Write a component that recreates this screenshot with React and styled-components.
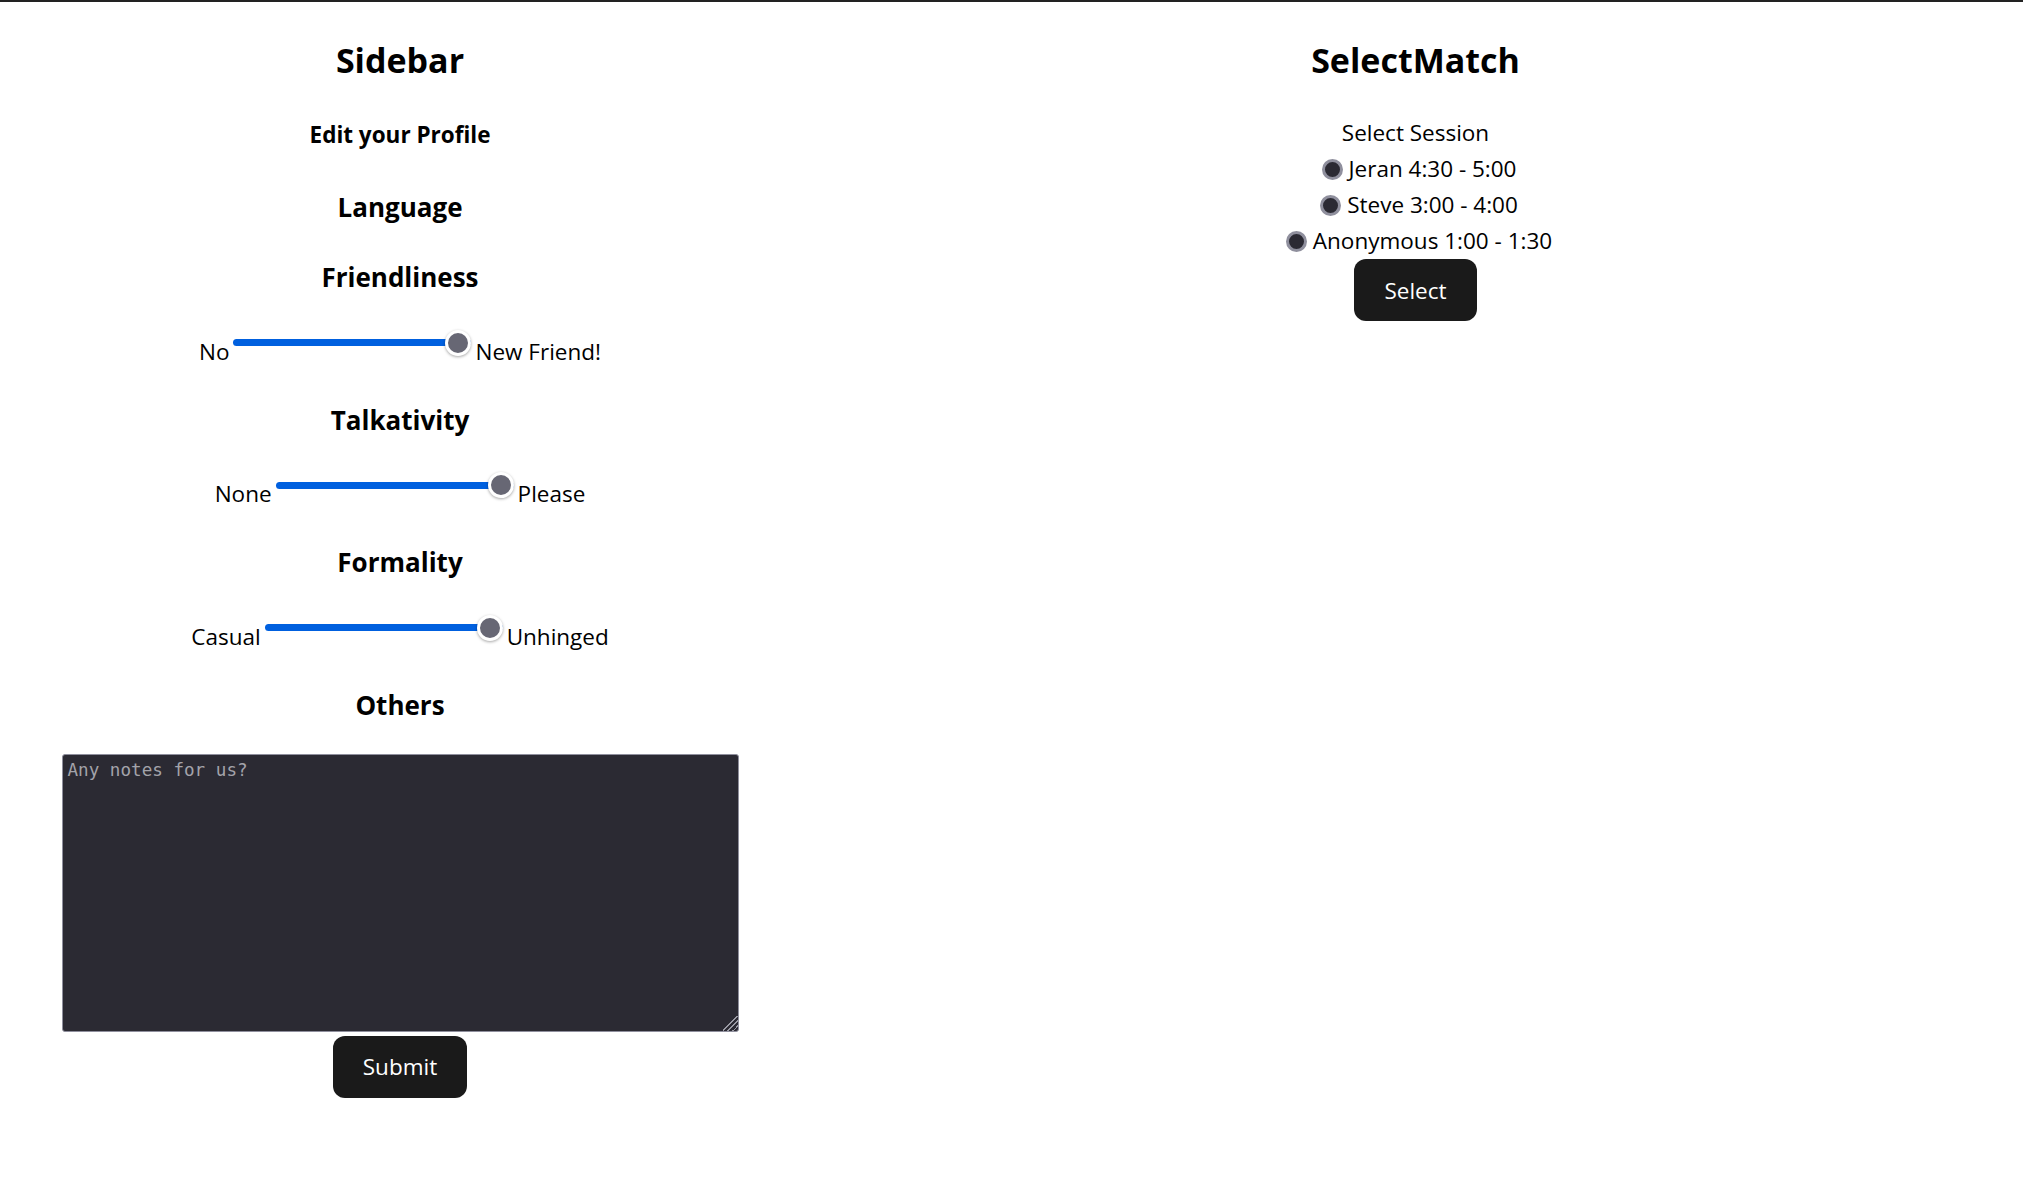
import React from "react";
import styled, { createGlobalStyle } from "styled-components";

const GlobalStyle = createGlobalStyle`
  html, body {
    margin: 0;
    padding: 0;
    background: #fff;
  }
  body {
    border-top: 2px solid #222;
    font-family: "Open Sans", "Noto Sans", sans-serif;
    font-size: 22.5px;
    color: #000;
  }
`;

const sliders = [
  { title: "Friendliness", min: "No", max: "New Friend!" },
  { title: "Talkativity", min: "None", max: "Please" },
  { title: "Formality", min: "Casual", max: "Unhinged" },
];

const sessions = ["Jeran 4:30 - 5:00", "Steve 3:00 - 4:00", "Anonymous 1:00 - 1:30"];

const App = () => {
  return (
    <>
      <GlobalStyle />
      <Page>
        <Sidebar>
          <Title>Sidebar</Title>
          <Subtitle>Edit your Profile</Subtitle>
          <SectionTitle>Language</SectionTitle>
          {sliders.map((s) => (
            <React.Fragment key={s.title}>
              <SectionTitle>{s.title}</SectionTitle>
              <SliderRow>
                <span>{s.min}</span>
                <Range defaultValue={100} />
                <span>{s.max}</span>
              </SliderRow>
            </React.Fragment>
          ))}
          <SectionTitle>Others</SectionTitle>
          <Notes placeholder="Any notes for us?" />
          <Button $gap="4px">Submit</Button>
        </Sidebar>
        <Main>
          <Title>SelectMatch</Title>
          <SessionLabel>Select Session</SessionLabel>
          {sessions.map((s) => (
            <Option key={s}>
              <Radio name="session" />
              {s}
            </Option>
          ))}
          <Button>Select</Button>
        </Main>
      </Page>
    </>
  );
};

const Page = styled.div`
  display: grid;
  grid-template-columns: 800px 1fr;
  min-height: 1195px;
`;

const Sidebar = styled.aside`
  display: flex;
  flex-direction: column;
  align-items: center;
  padding-top: 34px;
`;

const Main = styled.main`
  display: flex;
  flex-direction: column;
  align-items: center;
  padding-top: 34px;
  padding-left: 8px;
`;

const Title = styled.h2`
  margin: 0;
  font-size: 34px;
  line-height: 48px;
  font-weight: 700;
`;

const Subtitle = styled.h4`
  margin: 35px 0 5px;
  font-size: 22.5px;
  line-height: 32px;
  font-weight: 700;
`;

const SectionTitle = styled.h3`
  margin: 32px 0 0;
  font-size: 26px;
  line-height: 38px;
  font-weight: 700;
`;

const SliderRow = styled.div`
  display: flex;
  align-items: flex-start;
  margin-top: 38.5px;
  line-height: 34px;
`;

const Range = styled.input.attrs({ type: "range" })`
  -webkit-appearance: none;
  appearance: none;
  width: 238px;
  height: 26px;
  margin: -5px 4px 0;
  background: transparent;

  &::-webkit-slider-runnable-track {
    height: 7px;
    border-radius: 4px;
    background: #0060df;
  }
  &::-webkit-slider-thumb {
    -webkit-appearance: none;
    width: 26px;
    height: 26px;
    margin-top: -9.5px;
    border-radius: 50%;
    box-sizing: border-box;
    background: #676774;
    border: 3px solid #fff;
    box-shadow: 0 1px 3px rgba(0, 0, 0, 0.35);
  }
`;

const Notes = styled.textarea`
  margin-top: 30px;
  width: 677px;
  height: 278px;
  box-sizing: border-box;
  padding: 5px 5px;
  background: #2b2a33;
  color: #fbfbfe;
  border: 1px solid #8f8f9d;
  border-radius: 3px;
  font-family: "DejaVu Sans Mono", "Liberation Mono", monospace;
  font-size: 17.6px;
  color-scheme: dark;
  resize: both;

  &::placeholder {
    color: #a3a3aa;
  }
  &::-webkit-resizer {
    background: linear-gradient(
      135deg,
      transparent 0 46%,
      #9a9aa4 46% 52%,
      transparent 52% 63%,
      #9a9aa4 63% 69%,
      transparent 69% 80%,
      #9a9aa4 80% 86%,
      transparent 86%
    );
  }
  &::-webkit-scrollbar-corner {
    background: transparent;
  }
`;

const Button = styled.button`
  margin-top: ${(p) => p.$gap || "0"};
  height: 62px;
  padding: 0 29px;
  border: 1px solid transparent;
  border-radius: 12px;
  background: #1a1a1a;
  color: #fff;
  font-family: inherit;
  font-size: 22.5px;
  cursor: pointer;
`;

const SessionLabel = styled.div`
  margin-top: 31px;
  line-height: 36px;
`;

const Option = styled.label`
  display: flex;
  align-items: center;
  line-height: 36px;
`;

const Radio = styled.input.attrs({ type: "radio" })`
  -webkit-appearance: none;
  appearance: none;
  width: 21px;
  height: 21px;
  margin: 0 6px 0 7px;
  box-sizing: border-box;
  border-radius: 50%;
  background: #2b2a33;
  border: 3px solid #8f8f9d;
`;

export default App;
